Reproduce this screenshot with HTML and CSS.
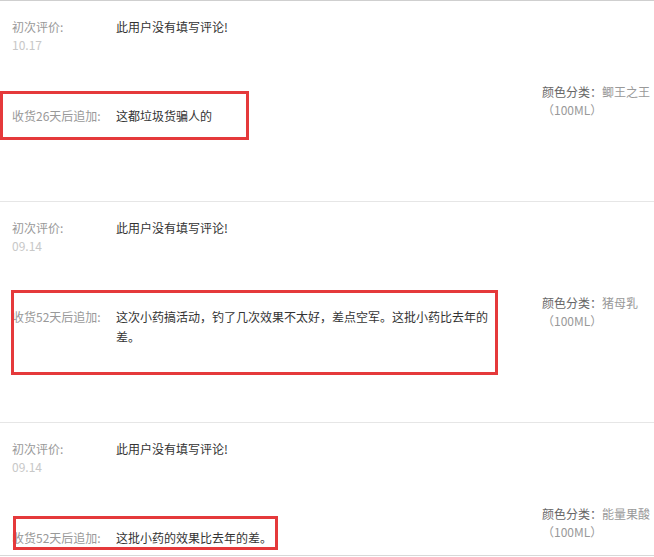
FILE: index.html
```
<!DOCTYPE html>
<html lang="zh-CN">
<head>
<meta charset="utf-8">
<title>评价</title>
<link rel="stylesheet" href="styles.css">
</head>
<body>
<div class="list">
  <section class="item item-first">
    <div class="review">
      <div class="row">
        <div class="label">初次评价:<div class="date">10.17</div></div>
        <div class="text">此用户没有填写评论!</div>
      </div>
      <div class="row row-append">
        <div class="label">收货26天后追加:</div>
        <div class="text">这都垃圾货骗人的</div>
      </div>
    </div>
    <div class="meta"><span class="meta-key">颜色分类：</span>鲫王之王（100ML）</div>
    <div class="mark mark-1"></div>
  </section>
  <section class="item">
    <div class="review">
      <div class="row">
        <div class="label">初次评价:<div class="date">09.14</div></div>
        <div class="text">此用户没有填写评论!</div>
      </div>
      <div class="row row-append">
        <div class="label">收货52天后追加:</div>
        <div class="text">这次小药搞活动，钓了几次效果不太好，差点空军。这批小药比去年的差。</div>
      </div>
    </div>
    <div class="meta"><span class="meta-key">颜色分类：</span>猪母乳（100ML）</div>
    <div class="mark mark-2"></div>
  </section>
  <section class="item">
    <div class="review">
      <div class="row">
        <div class="label">初次评价:<div class="date">09.14</div></div>
        <div class="text">此用户没有填写评论!</div>
      </div>
      <div class="row row-append">
        <div class="label">收货52天后追加:</div>
        <div class="text">这批小药的效果比去年的差。</div>
      </div>
    </div>
    <div class="meta"><span class="meta-key">颜色分类：</span>能量果酸（100ML）</div>
    <div class="mark mark-3"></div>
  </section>
</div>
<div class="edge"></div>
</body>
</html>
```
FILE: styles.css
```
html, body {
  margin: 0;
  padding: 0;
  background: #fff;
}
body {
  font-family: "Noto Sans CJK SC", "Liberation Sans", sans-serif;
  font-size: 12px;
  color: #333;
  width: 654px;
  overflow: hidden;
}
.item {
  position: relative;
  display: flex;
  border-top: 1px solid #e6e6e6;
}
.item-first {
  border-top-color: #cfcfcf;
}
.review {
  flex: 0 0 530px;
  padding: 17px 0 75px 12px;
}
.row {
  display: flex;
  line-height: 18px;
}
.row-append {
  margin-top: 52px;
  line-height: 20px;
}
.label {
  flex: 0 0 104px;
  color: #999;
}
.date {
  color: #c8c8c8;
  line-height: 18px;
}
.text {
  width: 376px;
  color: #333;
}
.meta {
  align-self: center;
  width: 112px;
  line-height: 18px;
  color: #999;
}
.meta-key {
  color: #666;
}
.mark {
  position: absolute;
  border: 3px solid #e5393b;
  box-sizing: border-box;
}
.mark-1 {
  left: 0;
  top: 90px;
  width: 249px;
  height: 49px;
}
.mark-2 {
  left: 11px;
  top: 88px;
  width: 487px;
  height: 85px;
}
.mark-3 {
  left: 13px;
  top: 93px;
  width: 265px;
  height: 34px;
}
.edge {
  position: fixed;
  left: 0;
  right: 0;
  bottom: 1px;
  height: 1px;
  background: #d8d8d8;
}
```
